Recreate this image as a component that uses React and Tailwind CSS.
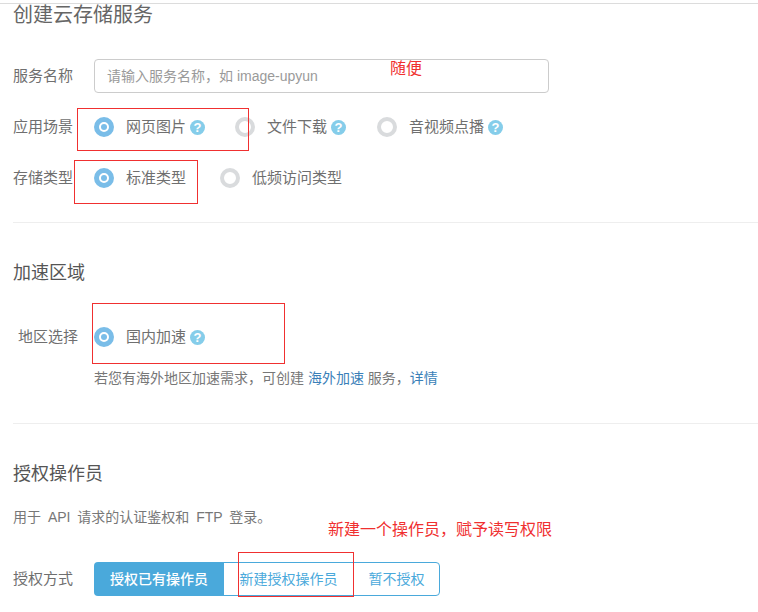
const fontStack = { fontFamily: '"Liberation Sans", "Noto Sans CJK SC", sans-serif' };

function Radio({ checked }) {
  if (checked) {
    return (
      <span className="flex h-5 w-5 shrink-0 items-center justify-center rounded-full border-[5px] border-[#7abde8] bg-white">
        <span className="h-[6px] w-[6px] rounded-full bg-[#7abde8]" />
      </span>
    );
  }
  return <span className="h-5 w-5 shrink-0 rounded-full border-[4px] border-[#d9dbdd] bg-white" />;
}

function Help({ className = '' }) {
  return (
    <span className={`flex h-[15px] w-[15px] shrink-0 items-center justify-center rounded-full bg-[#85cdea] text-[13px] leading-none font-bold text-white ${className}`}>
      ?
    </span>
  );
}

function Option({ checked, label, help, className = '' }) {
  return (
    <div className={`flex items-center ${className}`}>
      <Radio checked={checked} />
      <span className="ml-3 text-[15px] text-[#6f6f6f]">{label}</span>
      {help && <Help className="ml-1" />}
    </div>
  );
}

function Row({ label, className = '', labelClass = '', children }) {
  return (
    <div className={`flex h-[34px] items-center ${className}`}>
      <span className={`w-[81px] shrink-0 text-[15px] text-[#6f6f6f] ${labelClass}`}>{label}</span>
      {children}
    </div>
  );
}

function RedBox({ className }) {
  return <div className={`absolute border border-[#f03030] ${className}`} />;
}

export default function App() {
  return (
    <div className="relative h-[612px] w-[758px] overflow-hidden bg-white pt-[3px] pl-[13px]" style={fontStack}>
      <div className="-ml-[13px] h-px bg-[#dcdcdc]" />
      <h2 className="text-[20px] leading-[22px] text-[#666]">创建云存储服务</h2>

      <Row label="服务名称" className="mt-[33px]">
        <div className="flex h-[34px] w-[455px] items-center rounded-sm border border-[#ccc] pl-3 text-sm text-[#9a9a9a]">
          请输入服务名称，如 image-upyun
        </div>
      </Row>
      <Row label="应用场景" className="mt-[17px]">
        <Option checked label="网页图片" help />
        <Option label="文件下载" help className="ml-[30px]" />
        <Option label="音视频点播" help className="ml-[31px]" />
      </Row>
      <Row label="存储类型" className="mt-[17px]">
        <Option checked label="标准类型" />
        <Option label="低频访问类型" className="ml-[34px]" />
      </Row>

      <div className="mt-[27px] h-px bg-[#eee]" />

      <h3 className="mt-[38px] text-[18px] leading-6 text-[#555]">加速区域</h3>
      <Row label="地区选择" className="mt-[35px]" labelClass="pl-[5px]">
        <Option checked label="国内加速" help />
      </Row>
      <p className="mt-[14px] ml-[81px] text-sm leading-5 text-[#777]">
        若您有海外地区加速需求，可创建 <a className="text-[#3a7fb8]">海外加速</a> 服务，<a className="text-[#3a7fb8]">详情</a>
      </p>

      <div className="mt-[35px] h-px bg-[#eee]" />

      <h3 className="mt-[38px] text-[18px] leading-6 text-[#555]">授权操作员</h3>
      <p className="mt-[21px] text-sm leading-5 text-[#777] [word-spacing:3px]">用于 API 请求的认证鉴权和 FTP 登录。</p>

      <Row label="授权方式" className="mt-[35px]">
        <div className="flex h-[34px] text-sm">
          <button className="w-[130px] rounded-l-sm bg-[#4aa9db] font-medium text-white">授权已有操作员</button>
          <button className="w-[129px] border-y border-[#4aa9db] text-[#4aa9db]">新建授权操作员</button>
          <button className="w-[87px] rounded-r-sm border border-[#4aa9db] text-[#4aa9db]">暂不授权</button>
        </div>
      </Row>

      <RedBox className="top-[108px] left-[77px] h-[43px] w-[172px]" />
      <RedBox className="top-[160px] left-[74px] h-[44px] w-[124px]" />
      <RedBox className="top-[303px] left-[92px] h-[61px] w-[193px]" />
      <RedBox className="top-[552px] left-[238px] h-[45px] w-[116px]" />
      <span className="absolute top-[57px] left-[390px] text-base text-[#f03030]">随便</span>
      <span className="absolute top-[518px] left-[328px] text-base text-[#f03030]">新建一个操作员，赋予读写权限</span>
    </div>
  );
}
